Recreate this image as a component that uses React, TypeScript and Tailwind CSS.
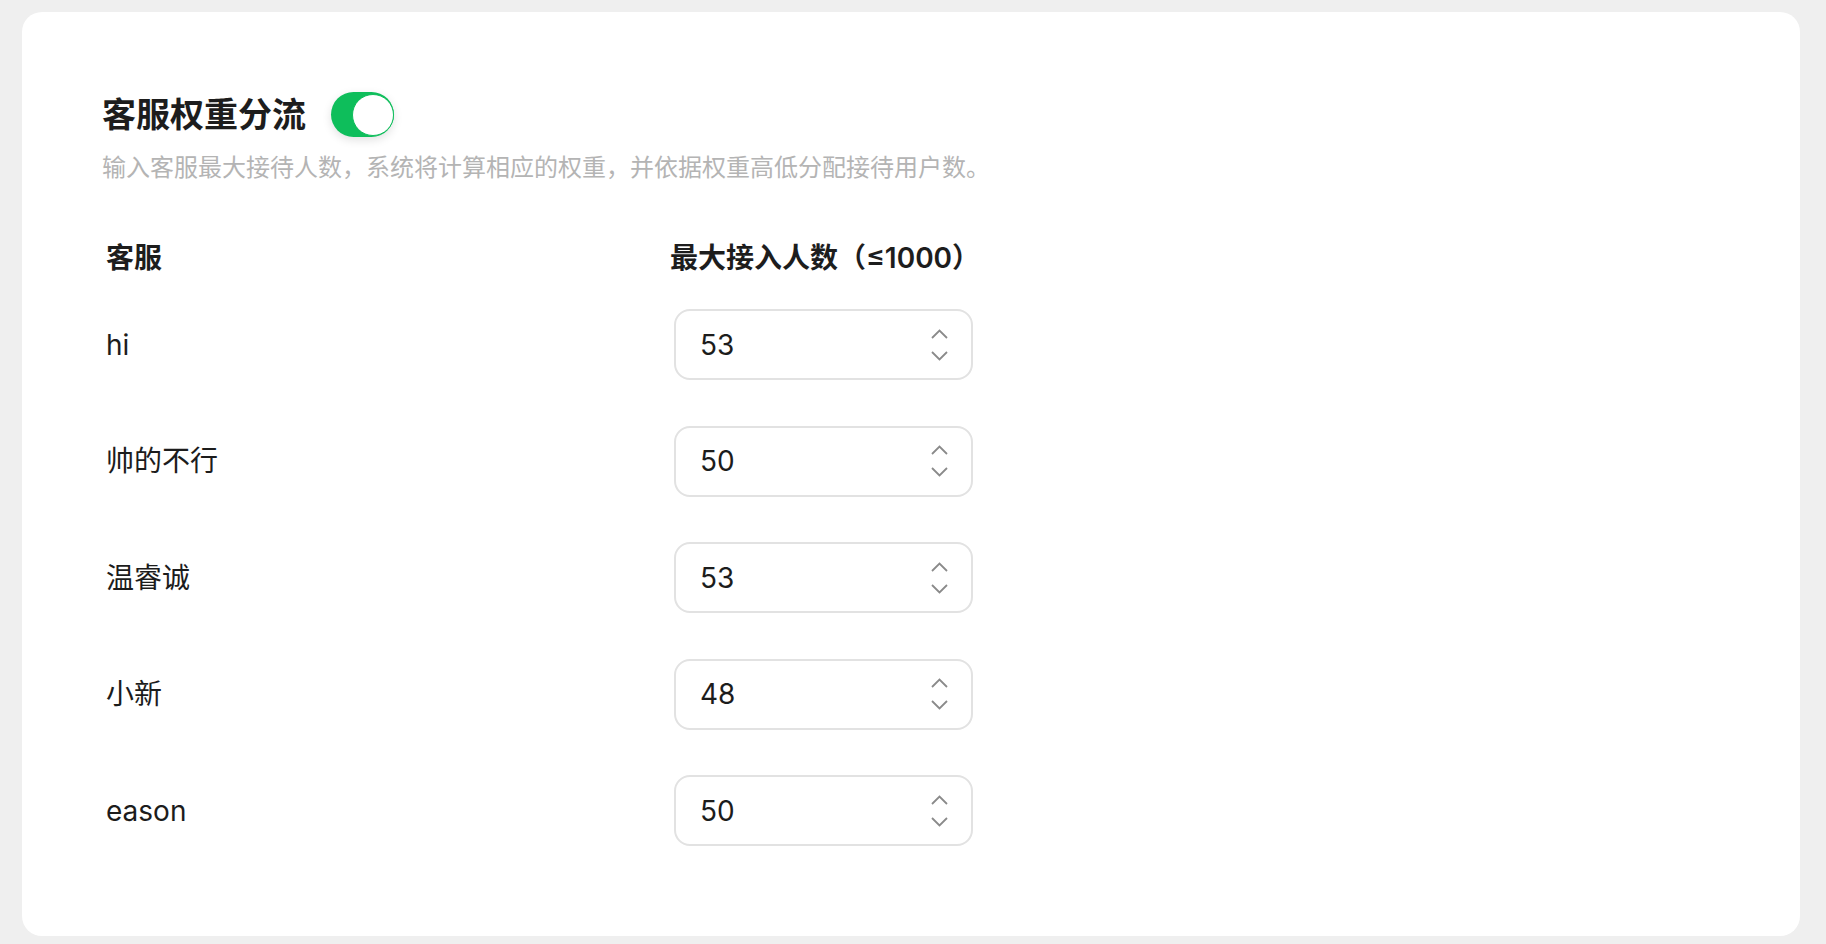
import React from 'react';

const agents = [
  { name: 'hi', max: 53 },
  { name: '帅的不行', max: 50 },
  { name: '温睿诚', max: 53 },
  { name: '小新', max: 48 },
  { name: 'eason', max: 50 },
];

const Stepper: React.FC<{ value: number }> = ({ value }) => (
  <div className="w-[299px] h-[71px] flex items-center justify-between rounded-[16px] border-2 border-[#e2e2e2] bg-white pl-6 pr-[23px]">
    <span className="text-[28px] leading-none text-[#1c1c1c]">{value}</span>
    <div className="flex flex-col items-center gap-[12px]">
      <svg width="17" height="10" viewBox="0 0 17 10" fill="none">
        <path d="M1 9L8.5 1.5L16 9" stroke="#8a8a8a" strokeWidth="1.8" />
      </svg>
      <svg width="17" height="10" viewBox="0 0 17 10" fill="none">
        <path d="M1 1L8.5 8.5L16 1" stroke="#8a8a8a" strokeWidth="1.8" />
      </svg>
    </div>
  </div>
);

export default function App() {
  return (
    <div
      className="min-h-screen bg-[#efefef] pl-[22px] pr-[26px] pt-3 pb-[11px]"
      style={{ fontFamily: 'Inter, "Noto Sans CJK SC", sans-serif' }}
    >
      <div className="rounded-[20px] bg-white pl-20 pt-20 pb-[90px]">
        {/* Title + switch */}
        <div className="flex items-center h-[45px]">
          <h1 className="text-[34px] font-bold leading-none text-[#1d1d1d]">客服权重分流</h1>
          <button className="ml-[25px] relative w-[63px] h-[45px] rounded-full bg-[#0ebe5b] shadow-[0_3px_10px_rgba(0,0,0,0.12)]">
            <span className="absolute right-0 top-[1.5px] w-[42px] h-[42px] rounded-full bg-white border border-[#0ebe5b]" />
          </button>
        </div>
        <p className="mt-[13px] text-[24px] leading-[36px] text-[#b4b4b4]">
          输入客服最大接待人数，系统将计算相应的权重，并依据权重高低分配接待用户数。
        </p>

        {/* Table */}
        <div className="ml-1 mt-[51px]">
          <div className="grid grid-cols-[568px_299px] h-10 items-center text-[28px] font-semibold text-[#1d1d1d]">
            <div>客服</div>
            <div className="-ml-1">最大接入人数（≤1000）</div>
          </div>
          <div className="mt-8 flex flex-col gap-[45.5px]">
            {agents.map(a => (
              <div key={a.name} className="grid grid-cols-[568px_299px] items-center">
                <div className="text-[28px] text-[#1c1c1c]">{a.name}</div>
                <Stepper value={a.max} />
              </div>
            ))}
          </div>
        </div>
      </div>
    </div>
  );
}
